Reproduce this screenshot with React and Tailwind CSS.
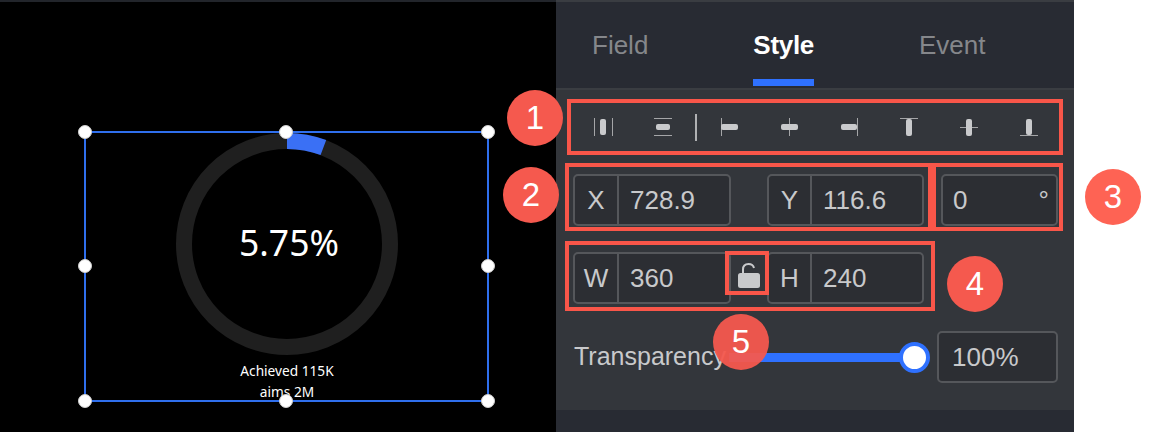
const sans = "font-['Liberation_Sans',Arial,sans-serif]"

const handles = [
  "left-[78px] top-[125px]",
  "left-[279px] top-[125px]",
  "left-[481px] top-[125px]",
  "left-[78px] top-[259px]",
  "left-[481px] top-[259px]",
  "left-[78px] top-[394px]",
  "left-[279px] top-[394px]",
  "left-[481px] top-[394px]",
]

const redBoxes = [
  "left-[567px] top-[99px] w-[496px] h-[56px]",
  "left-[565px] top-[163px] w-[367px] h-[68px]",
  "left-[932px] top-[163px] w-[131px] h-[68px]",
  "left-[565px] top-[241px] w-[370px] h-[70px]",
  "left-[725px] top-[251px] w-[44px] h-[44px]",
]

const badges = [
  { n: 1, pos: "left-[507px] top-[90px] bg-[#f5594e]" },
  { n: 2, pos: "left-[503px] top-[167px] bg-[#f5594e]" },
  { n: 3, pos: "left-[1085px] top-[169px] bg-[#fe6354]" },
  { n: 4, pos: "left-[947px] top-[256px] bg-[#f5594e]" },
  { n: 5, pos: "left-[713px] top-[314px] bg-[#f5594e]/95" },
]

// line + pill for the align buttons, drawn on a 24 box
function AlignIcon({ line, pill }) {
  return (
    <svg width="24" height="24" viewBox="0 0 24 24">
      {line.map((l, i) => (
        <rect key={i} x={l[0]} y={l[1]} width={l[2]} height={l[3]} fill="#a5a6a8" />
      ))}
      <rect x={pill[0]} y={pill[1]} width={pill[2]} height={pill[3]} rx="2" fill="#c9cacc" />
    </svg>
  )
}

const hLine = y => [3, y, 18, 1]
const vLine = x => [x, 3, 1, 18]

function ToolBtn({ line, pill }) {
  return (
    <div className="w-[60px] flex items-center justify-center shrink-0">
      <AlignIcon line={line} pill={pill} />
    </div>
  )
}

function Field({ label, value, width, labelWidth }) {
  return (
    <div className={`flex h-[52px] border-2 border-[#55575b] rounded-[5px] bg-[#2c2e33] text-[#c8c9cb] text-[26px] ${width}`}>
      <div className={`shrink-0 flex items-center justify-center border-r-2 border-[#55575b] ${labelWidth}`}>{label}</div>
      <div className="flex items-center pl-[11px]">{value}</div>
    </div>
  )
}

function LockIcon() {
  return (
    <svg width="24" height="28" viewBox="0 0 24 28">
      <path d="M6 13 V8.5 C6 5 8.3 3 11.5 3 C14.3 3 16.4 4.5 17 7" fill="none" stroke="#c9cacc" strokeWidth="2" />
      <rect x="1" y="12" width="22" height="15" rx="2.5" fill="#c9cacc" />
    </svg>
  )
}

export default function App() {
  return (
    <div className={`relative w-[1156px] h-[432px] flex overflow-hidden bg-white ${sans}`}>
      {/* canvas */}
      <div className="relative w-[556px] h-full bg-black shrink-0 font-['Noto_Sans',sans-serif] text-white">
        <div className="h-[2px] bg-[#22252b]"></div>
        <svg className="absolute left-[176px] top-[133px]" width="222" height="222" viewBox="0 0 222 222">
          <circle cx="111" cy="111" r="103" fill="none" stroke="#1f1f1f" strokeWidth="16" />
          <path d="M111 8 A103 103 0 0 1 147.4 14.6" fill="none" stroke="#3a70f5" strokeWidth="16" />
        </svg>
        <div className="absolute left-[176px] top-[132px] w-[226px] h-[222px] flex items-center justify-center text-[35.5px] leading-none">5.75%</div>
        <div className="absolute left-[187px] top-[360px] w-[200px] text-center text-[13.7px] leading-[21px]">
          <div>Achieved 115K</div>
          <div>aims 2M</div>
        </div>
        <div className="absolute left-[84px] top-[131px] w-[405px] h-[271px] border-2 border-[#2f6fed]"></div>
        {handles.map(h => (
          <div key={h} className={`absolute w-[14px] h-[14px] rounded-full bg-white border border-[#cfcfcf] ${h}`}></div>
        ))}
      </div>

      {/* config panel */}
      <div className="w-[518px] h-full flex flex-col bg-[#282b33] shrink-0">
        <div className="h-[2px] bg-[#3a3d42]"></div>
        <div className="h-[86px] flex pl-[36px] gap-[105px] text-[26px]">
          <div className="flex items-center text-[#85878b]">Field</div>
          <div className="relative flex items-center text-white font-bold tracking-[-0.3px]">
            Style
            <div className="absolute left-0 right-0 bottom-[2px] h-[7px] bg-[#2f71ff]"></div>
          </div>
          <div className="flex items-center text-[#85878b]">Event</div>
        </div>
        <div className="h-[2px] bg-[#3a3d42]"></div>

        <div className="h-[320px] bg-[#33363b] pl-[17px] pt-[13px]">
          <div className="flex h-[48px]">
            <ToolBtn line={[[3, 3, 1, 18], [21, 3, 1, 18]]} pill={[9, 4, 6, 16]} />
            <ToolBtn line={[[3, 3, 18, 1], [3, 20, 18, 1]]} pill={[5, 9, 14, 6]} />
            <div className="w-[2px] h-[27px] mx-[2px] self-center bg-[#b0b1b3] shrink-0"></div>
            <ToolBtn line={[vLine(4)]} pill={[4, 9, 17, 6]} />
            <ToolBtn line={[vLine(12)]} pill={[4, 9, 17, 6]} />
            <ToolBtn line={[vLine(20)]} pill={[4, 9, 16, 6]} />
            <ToolBtn line={[hLine(3)]} pill={[9, 4, 6, 17]} />
            <ToolBtn line={[hLine(12)]} pill={[9, 4, 6, 17]} />
            <ToolBtn line={[hLine(20)]} pill={[9, 4, 6, 16]} />
          </div>

          <div className="flex mt-[23px]">
            <Field label="X" value="728.9" width="w-[158px]" labelWidth="w-[44px]" />
            <div className="w-[36px]"></div>
            <Field label="Y" value="116.6" width="w-[157px]" labelWidth="w-[43px]" />
            <div className="flex justify-between w-[117px] h-[52px] ml-[17px] pl-[10px] pr-[7px] border-2 border-[#55575b] rounded-[5px] bg-[#2c2e33] text-[#c8c9cb] text-[26px]">
              <span className="self-center">0</span>
              <span className="self-center">°</span>
            </div>
          </div>

          <div className="flex mt-[26px]">
            <Field label="W" value="360" width="w-[158px]" labelWidth="w-[44px]" />
            <div className="w-[36px] flex justify-center pt-[9px]">
              <LockIcon />
            </div>
            <Field label="H" value="240" width="w-[157px]" labelWidth="w-[43px]" />
          </div>

          <div className="flex items-center mt-[27px] h-[52px] text-[#c8c9cb] text-[25px]">
            <div className="w-[156px] pl-px">Transparency</div>
            <div className="relative w-[186px] h-[9px] bg-[#2f71ff]">
              <div className="absolute -right-[15px] -top-[11px] w-[31px] h-[31px] rounded-full bg-white border-[4px] border-[#2f71ff]"></div>
            </div>
            <div className="flex items-center w-[121px] h-[52px] ml-[22px] pl-[13px] border-2 border-[#55575b] rounded-[5px] bg-[#2c2e33] text-[26px]">100%</div>
          </div>
        </div>
      </div>

      {/* red annotations on top */}
      {redBoxes.map(b => (
        <div key={b} className={`absolute border-4 border-[#f95649] ${b}`}></div>
      ))}
      {badges.map(b => (
        <div key={b.n} className={`absolute w-[56px] h-[56px] rounded-full flex items-center justify-center text-white text-[33px] ${b.pos}`}>
          {b.n}
        </div>
      ))}
    </div>
  )
}
